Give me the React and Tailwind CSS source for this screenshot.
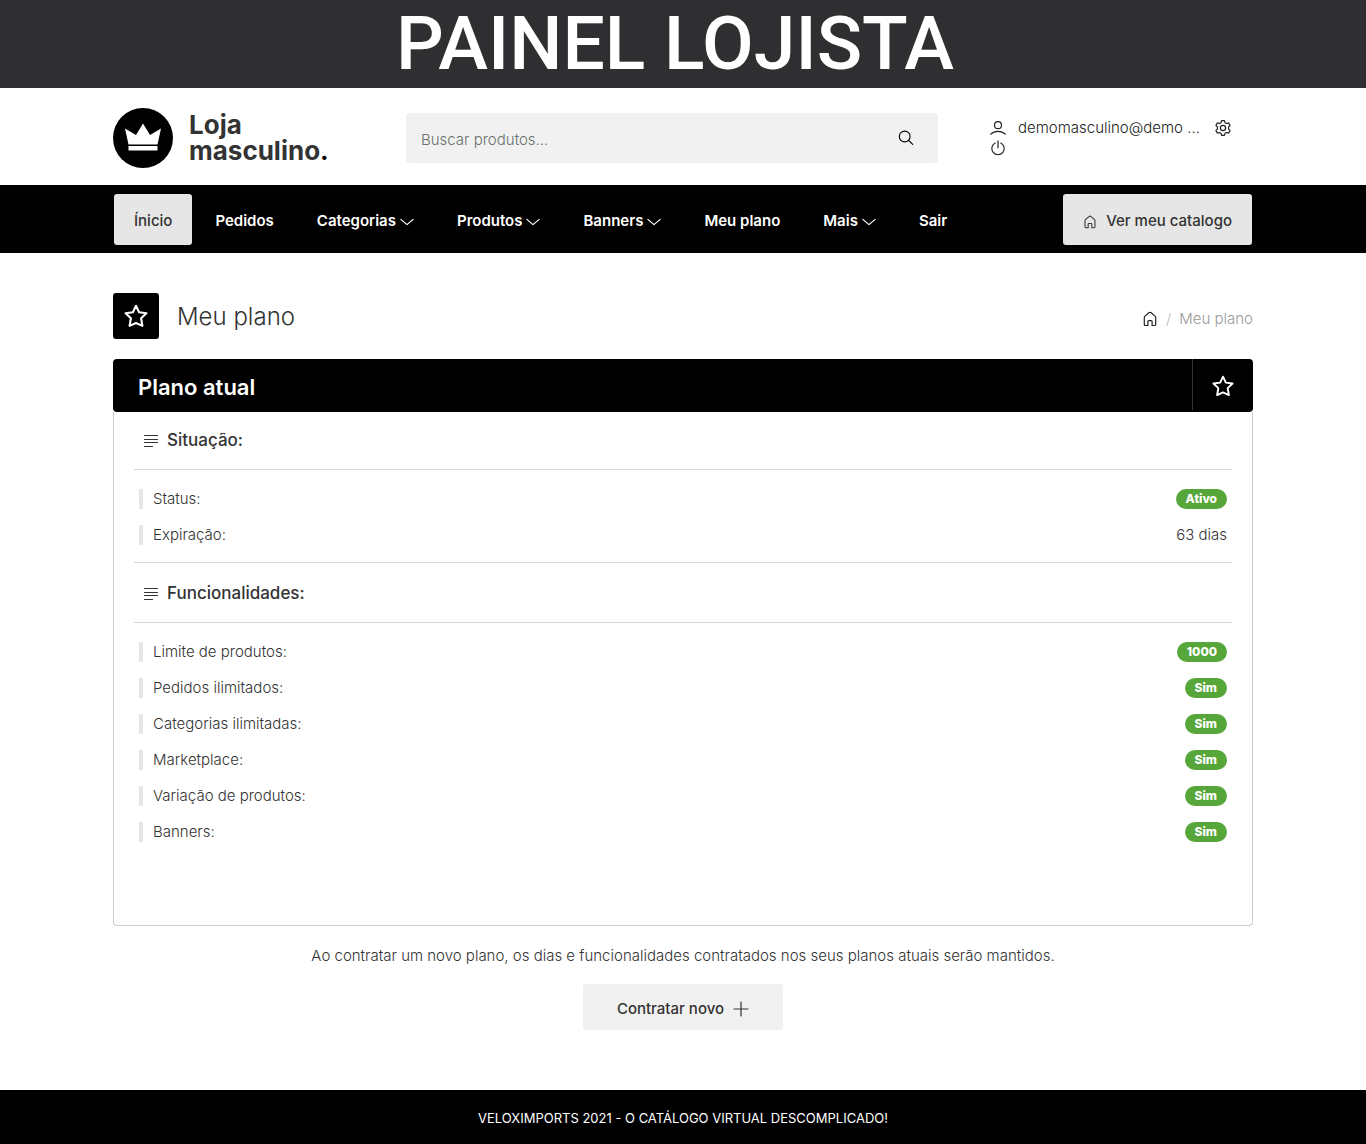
import clsx from "clsx";

const menu = [
  { label: "Ínicio", active: true },
  { label: "Pedidos" },
  { label: "Categorias", dropdown: true },
  { label: "Produtos", dropdown: true },
  { label: "Banners", dropdown: true },
  { label: "Meu plano" },
  { label: "Mais", dropdown: true },
  { label: "Sair" },
];

const situacao = [
  { label: "Status:", value: "Ativo", badge: true },
  { label: "Expiração:", value: "63 dias" },
];

const funcionalidades = [
  { label: "Limite de produtos:", value: "1000", badge: true },
  { label: "Pedidos ilimitados:", value: "Sim", badge: true },
  { label: "Categorias ilimitadas:", value: "Sim", badge: true },
  { label: "Marketplace:", value: "Sim", badge: true },
  { label: "Variação de produtos:", value: "Sim", badge: true },
  { label: "Banners:", value: "Sim", badge: true },
];

// Base for the line icons
const Icon = ({ children, className, stroke = 1.2, box = 16 }) => (
  <svg
    viewBox={`0 0 ${box} ${box}`}
    className={clsx("shrink-0", className)}
    fill="none"
    stroke="currentColor"
    strokeWidth={stroke}
    strokeLinecap="round"
    strokeLinejoin="round"
    aria-hidden="true"
  >
    {children}
  </svg>
);

const HomeIcon = ({ className }) => (
  <Icon className={className}>
    <path d="M5.900 14.500H3.300a1 1 0 0 1-1-1V6.600a2 2 0 0 1 .7-1.500L6.800 1.800a1.800 1.800 0 0 1 2.400 0L13 5.100a2 2 0 0 1 .7 1.500v6.900a1 1 0 0 1-1 1h-2.600v-3.900a1 1 0 0 0-1-1H6.900a1 1 0 0 0-1 1z" />
  </Icon>
);

const StarIcon = ({ className }) => (
  <Icon className={className} box={24} stroke={2.1}>
    <path d="M12 1.800l3.100 6.500 7.300 1-5.300 5 1.300 7.600-6.400-2.900-6.400 2.900 1.300-7.600-5.300-5 7.300-1z" />
  </Icon>
);

const ChevronIcon = () => (
  <Icon className="h-4 w-[14px]" stroke={1.4}>
    <path d="M1 5l7 6 7-6" />
  </Icon>
);

const LinesIcon = () => (
  <Icon className="size-4" stroke={1.1}>
    <path d="M1.500 2.500h13M1.500 6.500h13M1.500 9.500h13M1.500 13.500h8" />
  </Icon>
);

const TopBanner = () => (
  <div className="h-[88px] bg-[#2f2f31] pr-4 text-center font-[Roboto] text-[75px] leading-[86px] font-medium text-white">
    PAINEL LOJISTA
  </div>
);

const Header = () => (
  <header className="mx-auto flex max-w-[1170px] px-[15px] pt-5 pb-[17px]">
    <a href="#" className="flex w-[293px] items-center gap-4">
      <svg viewBox="0 0 60 60" className="size-[60px] shrink-0" aria-hidden="true">
        <circle cx="30" cy="30" r="30" />
        <path d="M12 20.500l11 6.500 7-11.500L37 27l11-6.500-3.500 16h-29z" fill="#fff" />
        <path d="M15.500 38h29v4.500h-29z" fill="#fff" />
      </svg>
      <span className="text-[26px] leading-[26px] font-bold text-[#333]">
        Loja
        <br />
        masculino<span className="text-black">.</span>
      </span>
    </a>

    <form className="mt-[5px] flex h-[50px] flex-1 items-center rounded bg-[#f1f1f1]">
      <input
        type="text"
        aria-label="Buscar produtos"
        placeholder="Buscar produtos..."
        className="h-full min-w-0 flex-1 bg-transparent px-[15px] pt-[2px] text-[15px] font-light placeholder:text-[#68716c]"
      />
      <button type="button" aria-label="Buscar" className="mr-6">
        <Icon className="size-4" stroke={1.1}>
          <circle cx="6.700" cy="6.500" r="5.400" />
          <path d="M10.700 10.500l4 3.800" />
        </Icon>
      </button>
    </form>

    <div className="ml-[52px] flex w-[263px] flex-col pt-[10px] text-[#222]">
      <div className="flex h-5 items-center">
        <Icon className="size-4">
          <circle cx="8" cy="5.200" r="3.500" />
          <path d="M.7 14.200c2-2 4.500-2.900 7.300-2.900s5.300.9 7.300 2.900" />
        </Icon>
        <a href="#" className="ml-3 w-[185px] text-[15px] font-light whitespace-nowrap">
          demomasculino@demo ...
        </a>
        <a href="#" aria-label="Configurações" className="ml-3">
          <Icon className="size-4">
            <path d="M6.500.7h3l.5 2 1.400.8 2.100-.6 1.600 2.500-1.500 1.500v2.200l1.500 1.500-1.600 2.500-2.100-.6-1.400.8-.5 2h-3l-.5-2-1.400-.8-2.100.6-1.600-2.500 1.500-1.500V6.900L.9 5.400l1.600-2.500 2.100.6L6 2.700z" />
            <circle cx="8" cy="8" r="2.600" />
          </Icon>
        </a>
      </div>
      <a href="#" aria-label="Sair" className="flex h-5 w-4 items-center">
        <Icon className="size-4">
          <path d="M8 .8v7M5.200 3a6.200 6.200 0 1 0 5.600 0" />
        </Icon>
      </a>
    </div>
  </header>
);

const Navbar = () => (
  <nav className="bg-black">
    <div className="mx-auto flex max-w-[1170px] items-center justify-between px-4 pt-[9px] pb-2">
      <ul className="flex gap-[3px]">
        {menu.map((item) => (
          <li key={item.label}>
            <a
              href="#"
              className={clsx(
                "flex h-[51px] items-center gap-1 rounded-[3px] px-5 pt-1 text-[15px] whitespace-nowrap",
                item.active ? "bg-[#e6e6e6] font-medium text-[#333]" : "font-semibold text-white"
              )}
            >
              {item.label}
              {item.dropdown && <ChevronIcon />}
            </a>
          </li>
        ))}
      </ul>
      <a
        href="#"
        className="flex h-[51px] items-center gap-[9px] rounded-[3px] bg-[#e6e6e6] px-5 pt-1 text-[15px] font-medium text-[#333]"
      >
        <HomeIcon className="size-[14px]" />
        Ver meu catalogo
      </a>
    </div>
  </nav>
);

const SectionTitle = ({ children }) => (
  <h3 className="flex h-[57px] items-center gap-2 px-[9px] text-[17px] font-medium text-[#333]">
    <LinesIcon />
    {children}
  </h3>
);

const PlanRows = ({ rows }) => (
  <dl className="border-t border-[#d5d5d5] px-[5px] pt-[11px] pb-[9px]">
    {rows.map((row) => (
      <div key={row.label} className="flex h-9 items-center justify-between text-[15px] font-light text-[#333]">
        <dt className="border-l-4 border-[#e6e6e6] pl-[10px] leading-5">{row.label}</dt>
        <dd
          className={clsx(
            row.badge && "rounded-full bg-[#57a639] px-[10px] text-xs leading-5 font-extrabold text-white"
          )}
        >
          {row.value}
        </dd>
      </div>
    ))}
  </dl>
);

const App = () => (
  <div className="bg-white font-[Inter,sans-serif]">
    <TopBanner />
    <Header />
    <Navbar />

    <main className="mx-auto max-w-[1170px] px-[15px] pt-10 pb-[60px]">
      <div className="flex items-center justify-between">
        <div className="flex items-center gap-[18px]">
          <span className="flex size-[46px] items-center justify-center rounded-[3px] bg-black text-white">
            <StarIcon className="size-6" />
          </span>
          <h1 className="pt-[2px] text-[24px] leading-8 font-light text-[#333]">Meu plano</h1>
        </div>
        <div className="flex items-center gap-2 pt-[6px] text-[15px] font-light text-[#999]">
          <a href="#" aria-label="Início" className="text-[#222]">
            <HomeIcon className="size-4" />
          </a>
          <span className="text-[#bbb]">/</span>
          <span>Meu plano</span>
        </div>
      </div>

      <section className="mt-5">
        <div className="flex h-[53px] items-center justify-between rounded bg-black pl-[25px] text-white">
          <h2 className="pt-[2px] text-[22px] leading-7 font-semibold">Plano atual</h2>
          <span className="mb-[2px] flex h-[51px] w-[61px] items-center justify-center border-l border-[#333] pt-[2px]">
            <StarIcon className="size-[22px]" />
          </span>
        </div>
        <div className="rounded-b border border-t-0 border-[#ccc] px-5 pb-[66px]">
          <SectionTitle>Situação:</SectionTitle>
          <PlanRows rows={situacao} />
          <div className="border-t border-[#d5d5d5] pt-[2px]">
            <SectionTitle>Funcionalidades:</SectionTitle>
          </div>
          <PlanRows rows={funcionalidades} />
        </div>
      </section>

      <div className="flex flex-col items-center">
        <p className="mt-5 text-center text-[15px] leading-5 font-light text-[#333]">
          Ao contratar um novo plano, os dias e funcionalidades contratados nos seus planos atuais serão mantidos.
        </p>
        <button
          type="button"
          className="mt-[18px] flex h-[46px] w-[200px] items-center justify-center gap-[9px] rounded-[3px] bg-[#f1f1f1] pt-1 text-[15px] font-medium text-[#333]"
        >
          Contratar novo
          <Icon className="size-4">
            <path d="M8 1v14M1 8h14" />
          </Icon>
        </button>
      </div>
    </main>

    <footer className="bg-black px-4 pt-[18px] pb-4 text-center text-[13px] leading-5 text-white">
      VELOXIMPORTS 2021 - O CATÁLOGO VIRTUAL DESCOMPLICADO!
    </footer>
  </div>
);

export default App;
